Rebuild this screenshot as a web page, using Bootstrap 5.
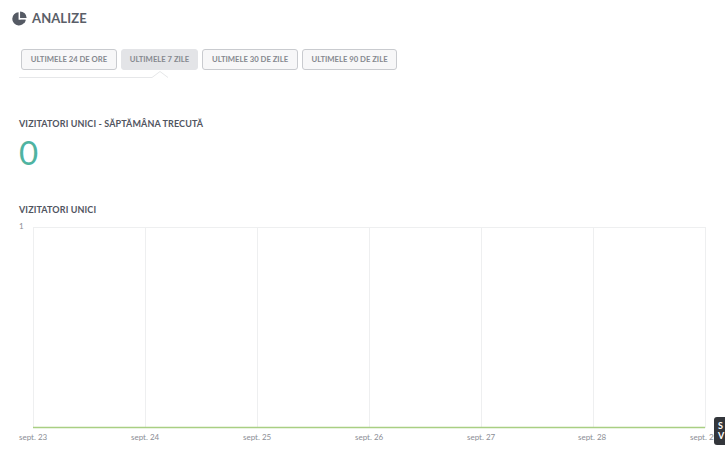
<!DOCTYPE html>
<html lang="ro">
<head>
<meta charset="utf-8">
<title>Analize</title>
<link href="https://cdn.jsdelivr.net/npm/bootstrap@5.3.0/dist/css/bootstrap.min.css" rel="stylesheet">
<style>
html,body{height:453px;overflow:hidden;background:#fff;}
body{font-family:Lato,"Liberation Sans",sans-serif;color:#51555f;position:relative;}
.pg-head{padding:5px 12px 0;height:32px;gap:5px;}
.pg-head svg{width:15px;height:15px;}
.pg-title{font-size:13px;font-weight:700;letter-spacing:.1px;margin:0;line-height:15px;color:#5a5e68;}
.tab-bar{margin:17px 0 0 19px;padding:0 0 0 2px;height:28px;gap:4px;position:relative;}
.tab-btn{font-size:7.7px;font-weight:700;color:#85888f;background:#f7f7f8;border:1px solid #c9cbcf;border-radius:3px;padding:0;height:21px;line-height:19px;white-space:nowrap;text-align:center;}
.tab-w1{width:96px;}
.tab-w2{width:77px;}
.tab-w3{width:96px;}
.tab-w4{width:95px;}
.tab-btn.on{background:#e3e4e7;border-color:#e3e4e7;}
.tab-line{position:absolute;left:0;top:20px;width:150px;height:10px;}
.sec-label{font-size:9px;font-weight:700;color:#51555f;line-height:11px;margin:0;letter-spacing:.11px;}
.stat-block{margin:41px 0 0 19px;}
.stat-num{font-size:33px;line-height:40px;color:#4fb3a1;font-weight:400;margin-top:3px;}
.chart-block{margin:32px 0 0 19px;}
.chart-svg{display:block;position:absolute;left:0;top:215px;width:725px;height:238px;}
.chart-svg text{font-family:Lato,"Liberation Sans",sans-serif;font-size:8px;fill:#8b8e95;}
.chat-tab{position:absolute;left:714px;top:417px;width:11px;height:28px;background:#33363b;border-radius:3px 0 0 3px;color:#fff;font-size:9px;font-weight:700;line-height:10px;padding:4px 0 0 4px;overflow:hidden;white-space:nowrap;}
</style>
</head>
<body>
<header class="pg-head d-flex align-items-center">
<svg viewBox="0 0 16 16" aria-hidden="true"><path fill="#555a64" d="M7 1.2A7.1 7.1 0 1 0 14.4 9.3L7 9.3Z"/><path fill="#555a64" d="M8.6 .4A7.1 7.1 0 0 1 15.6 7.4L8.6 7.4Z"/><path fill="#555a64" d="M9 9.3h5.6a7 7 0 0 1-1.7 3.8Z"/></svg>
<h1 class="pg-title">ANALIZE</h1>
</header>
<div class="tab-bar d-flex">
<button type="button" class="btn tab-btn tab-w1">ULTIMELE 24 DE ORE</button>
<button type="button" class="btn tab-btn tab-w2 on">ULTIMELE 7 ZILE</button>
<button type="button" class="btn tab-btn tab-w3">ULTIMELE 30 DE ZILE</button>
<button type="button" class="btn tab-btn tab-w4">ULTIMELE 90 DE ZILE</button>
<svg class="tab-line" viewBox="0 0 150 10" aria-hidden="true"><path fill="none" stroke="#e6e7e9" d="M0 8.5H133L141 2.5L149 8.5"/></svg>
</div>
<section class="stat-block">
<p class="sec-label">VIZITATORI UNICI - SĂPTĂMÂNA TRECUTĂ</p>
<div class="stat-num">0</div>
</section>
<section class="chart-block">
<p class="sec-label">VIZITATORI UNICI</p>
</section>
<svg class="chart-svg" viewBox="0 215 725 238">
<g stroke="#eeeff0" fill="none">
<path d="M33.5 227.5H705.5"/>
<path d="M33.5 227V428M145.5 227V428M257.5 227V428M369.5 227V428M481.5 227V428M593.5 227V428M705.5 227V428"/>
</g>
<path d="M33 427.5H705" stroke="#a9cf83" stroke-width="1.5"/>
<text x="19" y="229">1</text>
<text x="19" y="440">sept. 23</text>
<text x="131" y="440">sept. 24</text>
<text x="243" y="440">sept. 25</text>
<text x="355" y="440">sept. 26</text>
<text x="467" y="440">sept. 27</text>
<text x="578" y="440">sept. 28</text>
<text x="690" y="440">sept. 29</text>
</svg>
<div class="chat-tab">S<br>V</div>
<script src="https://cdn.jsdelivr.net/npm/bootstrap@5.3.0/dist/js/bootstrap.bundle.min.js"></script>
</body>
</html>
